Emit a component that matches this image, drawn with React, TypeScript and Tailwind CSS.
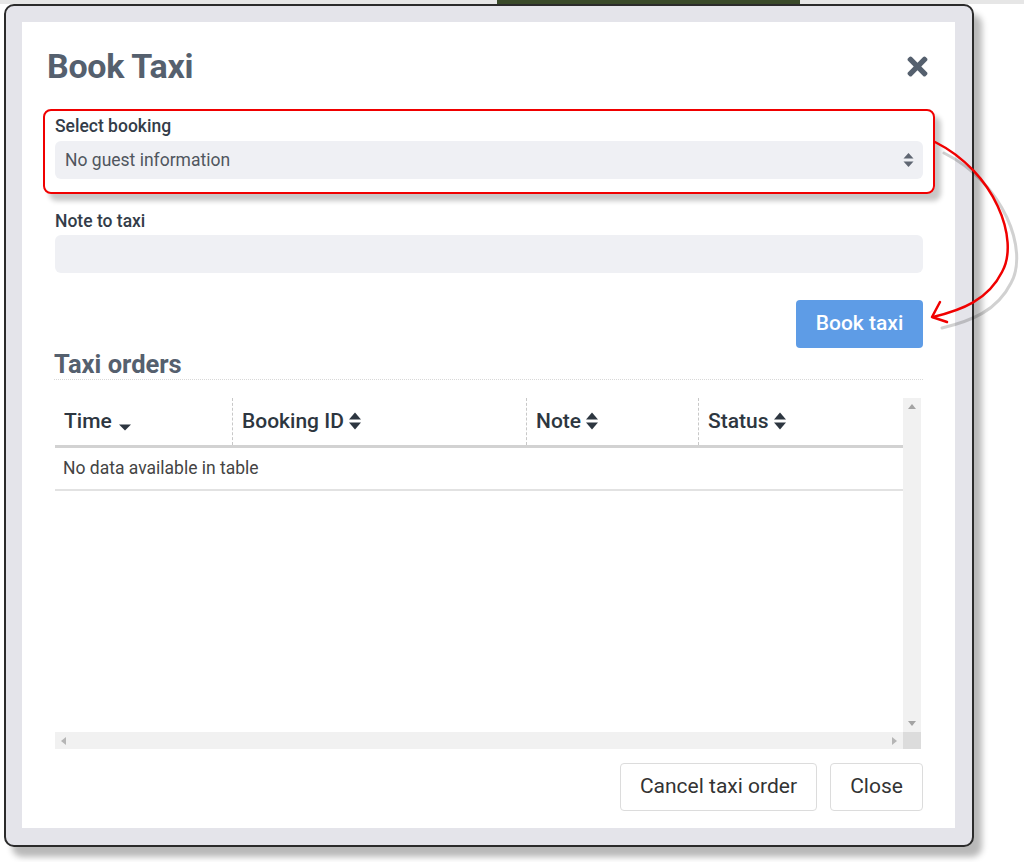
import { FaTimes } from "react-icons/fa";

function SortBoth() {
  return (
    <svg width="14" height="20" viewBox="0 0 14 20" className="inline-block ml-[4px] -mt-[1px]">
      <path d="M1 8.5 L7 1.5 L13 8.5 Z" fill="#2d3640" />
      <path d="M1 11.5 L7 18.5 L13 11.5 Z" fill="#2d3640" />
    </svg>
  );
}

function SortDown() {
  return (
    <svg width="14" height="20" viewBox="0 0 14 20" className="inline-block ml-[6px] mt-[4px]">
      <path d="M1 10.5 L7 16.5 L13 10.5 Z" fill="#2d3640" />
    </svg>
  );
}

const COLUMNS = [
  { label: "Time", width: "w-[177px]", sort: "down" },
  { label: "Booking ID", width: "w-[294px]", sort: "both" },
  { label: "Note", width: "w-[172px]", sort: "both" },
  { label: "Status", width: "flex-1", sort: "both" },
];

export default function App() {
  return (
    <div
      className="relative w-[1024px] h-[862px] bg-white overflow-hidden"
      style={{ fontFamily: "Roboto, 'Noto Sans', sans-serif" }}
    >
      {/* background peeking at top */}
      <div className="flex h-[4px]">
        <div className="w-[497px] bg-[#e6e6e6]" />
        <div className="w-[303px] bg-[#3a4a2a]" />
        <div className="flex-1 bg-[#e6e6e6]" />
      </div>

      {/* frame */}
      <div className="ml-[4px] w-[970px] h-[843px] rounded-[10px] border-2 border-[#2b2b2b] bg-[#e4e4ea] shadow-[8px_10px_6px_rgba(0,0,0,0.28)] pl-[16px] pr-[15px] pt-[16px]">
        <div className="w-[933px] h-[806px] bg-white pl-[33px] pr-[32px] pt-[24px] flex flex-col">
          {/* header */}
          <div className="flex items-center justify-between -ml-[8px] h-[40px]">
            <h1 className="text-[34px] font-bold text-[#55606e] leading-[40px] tracking-[-0.3px]">Book Taxi</h1>
            <FaTimes className="text-[#55606e] text-[29px] mr-[-9px]" />
          </div>

          {/* select booking, highlighted */}
          <div className="mt-[23px] -mx-[12px] rounded-[8px] border-2 border-[#f00000] px-[10px] pt-[3px] pb-[13px] shadow-[6px_7px_5px_rgba(0,0,0,0.22)]">
            <div className="text-[17.5px] font-medium text-[#333c48] leading-[24px]">Select booking</div>
            <div className="mt-[3px] h-[38px] rounded-[6px] bg-[#eff0f4] flex items-center justify-between pl-[10px] pr-[9px]">
              <span className="text-[17.5px] text-[#50565e]">No guest information</span>
              <svg width="11" height="16" viewBox="0 0 11 16">
                <path d="M0.5 6.5 L5.5 1 L10.5 6.5 Z" fill="#5f6672" />
                <path d="M0.5 9.5 L5.5 15 L10.5 9.5 Z" fill="#5f6672" />
              </svg>
            </div>
          </div>

          {/* note */}
          <div className="mt-[15px] text-[17.5px] font-medium text-[#333c48] leading-[24px]">Note to taxi</div>
          <div className="mt-[2px] h-[38px] rounded-[6px] bg-[#eff0f4]" />

          <div className="flex justify-end mt-[27px]">
            <button className="h-[48px] w-[127px] rounded-[4px] bg-[#5e9ce6] text-white text-[21px] font-medium">
              Book taxi
            </button>
          </div>

          {/* taxi orders */}
          <div className="mt-[1px] -ml-[1px] border-b border-dotted border-[#d8d8d8] h-[31px]">
            <h2 className="text-[25.5px] font-bold text-[#55606e] leading-[30px]">Taxi orders</h2>
          </div>

          <div className="mt-[18px] mr-[2px] flex flex-col">
            <div className="flex h-[334px]">
              <div className="flex-1 flex flex-col">
                <div className="flex h-[50px] border-b-[3px] border-[#d2d2d2]">
                  {COLUMNS.map((c, i) => (
                    <div
                      key={c.label}
                      className={`${c.width} flex items-center pl-[9px] text-[21px] font-medium text-[#2d3640] ${
                        i > 0 ? "border-l border-dashed border-[#c8c8c8]" : ""
                      }`}
                    >
                      {c.label}
                      {c.sort === "down" ? <SortDown /> : <SortBoth />}
                    </div>
                  ))}
                </div>
                <div className="h-[43px] border-b-2 border-[#e2e2e2] flex items-center pl-[8px] text-[17.5px] text-[#444]">
                  No data available in table
                </div>
              </div>
              <div className="w-[18px] bg-[#f1f1f1] flex flex-col items-center justify-between py-[6px]">
                <svg width="8" height="5" viewBox="0 0 8 5">
                  <path d="M0 5 L4 0 L8 5 Z" fill="#a3a3a3" />
                </svg>
                <svg width="8" height="5" viewBox="0 0 8 5">
                  <path d="M0 0 L4 5 L8 0 Z" fill="#a3a3a3" />
                </svg>
              </div>
            </div>
            <div className="flex h-[17px]">
              <div className="flex-1 bg-[#f1f1f1] flex items-center justify-between px-[6px]">
                <svg width="5" height="8" viewBox="0 0 5 8">
                  <path d="M5 0 L0 4 L5 8 Z" fill="#b5b5b5" />
                </svg>
                <svg width="5" height="8" viewBox="0 0 5 8">
                  <path d="M0 0 L5 4 L0 8 Z" fill="#b5b5b5" />
                </svg>
              </div>
              <div className="w-[18px] bg-[#dcdcdc]" />
            </div>
          </div>

          {/* footer */}
          <div className="mt-[14px] flex justify-end gap-[13px]">
            <button className="h-[48px] w-[197px] rounded-[4px] border border-[#dcdcdc] bg-white text-[21px] text-[#333]">
              Cancel taxi order
            </button>
            <button className="h-[48px] w-[93px] rounded-[4px] border border-[#dcdcdc] bg-white text-[21px] text-[#333]">
              Close
            </button>
          </div>
        </div>
      </div>

      {/* curved annotation arrow */}
      <svg className="absolute left-0 top-0 pointer-events-none" width="1024" height="862" viewBox="0 0 1024 862">
        <g fill="none" strokeLinecap="round" strokeLinejoin="round">
          <g stroke="rgba(0,0,0,0.18)" strokeWidth="3" transform="translate(9 11)">
            <path d="M935 142 C 995 172, 1020 240, 1002 272 C 988 300, 962 310, 933 317" />
          </g>
          <g stroke="#f00000" strokeWidth="2.5">
            <path d="M935 142 C 995 172, 1020 240, 1002 272 C 988 300, 962 310, 933 317" />
            <path d="M940 302 L932 317 L947 322" />
          </g>
        </g>
      </svg>
    </div>
  );
}
